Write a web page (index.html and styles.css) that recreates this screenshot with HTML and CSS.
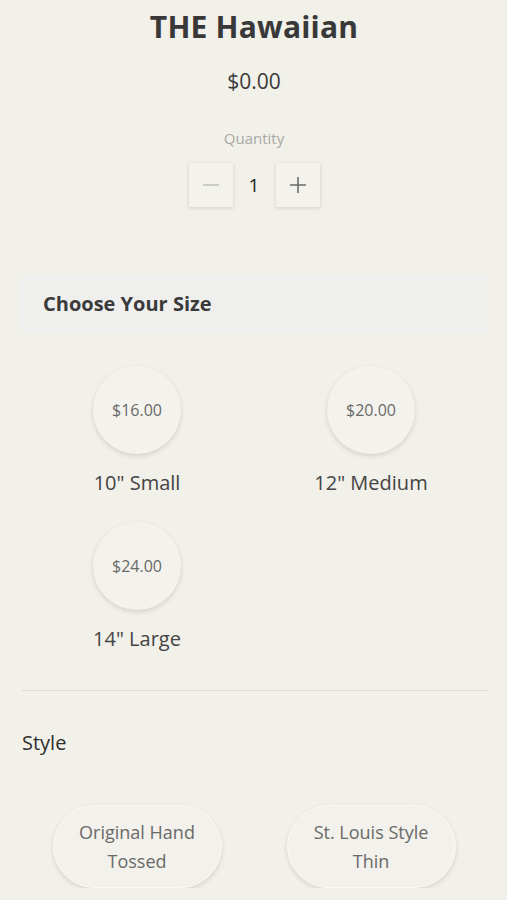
FILE: index.html
```html
<!DOCTYPE html>
<html>
<head>
<meta charset="utf-8">
<link rel="stylesheet" href="styles.css">
</head>
<body>
<div class="page">
  <h1 class="title">THE Hawaiian</h1>
  <div class="price">$0.00</div>
  <div class="qty-label">Quantity</div>
  <div class="qty">
    <button class="qbtn minus"><svg width="18" height="18" viewBox="0 0 18 18"><path d="M1 9h16" stroke="#c4c3bf" stroke-width="1.6"/></svg></button>
    <span class="qnum">1</span>
    <button class="qbtn plus"><svg width="18" height="18" viewBox="0 0 18 18"><path d="M1 9h16M9 1v16" stroke="#6a6a68" stroke-width="1.6"/></svg></button>
  </div>

  <div class="section-head">Choose Your Size</div>

  <div class="sizes">
    <div class="size">
      <div class="circle">$16.00</div>
      <div class="size-name">10" Small</div>
    </div>
    <div class="size">
      <div class="circle">$20.00</div>
      <div class="size-name">12" Medium</div>
    </div>
    <div class="size">
      <div class="circle">$24.00</div>
      <div class="size-name">14" Large</div>
    </div>
  </div>

  <hr class="divider">

  <div class="style-title">Style</div>

  <div class="styles">
    <div class="pill-cell"><div class="pill">Original Hand<br>Tossed</div></div>
    <div class="pill-cell"><div class="pill">St. Louis Style<br>Thin</div></div>
  </div>
</div>
</body>
</html>
```

FILE: styles.css
```css
html, body {
  margin: 0;
  padding: 0;
  background: #f1f0e9;
}
body {
  font-family: "Open Sans", "Liberation Sans", sans-serif;
  color: #333;
}
.page {
  padding: 0 19px 0 20px;
}
.title {
  margin: 0;
  padding-top: 8px;
  text-align: center;
  font-size: 30px;
  line-height: 38px;
  font-weight: 700;
  color: #383838;
  letter-spacing: 0.2px;
}
.price {
  margin-top: 22px;
  text-align: center;
  font-size: 21px;
  line-height: 26px;
  color: #3a3a3a;
}
.qty-label {
  margin-top: 35px;
  text-align: center;
  font-size: 15px;
  line-height: 18px;
  color: #a9a9a6;
}
.qty {
  margin-top: 16px;
  display: flex;
  justify-content: center;
  align-items: center;
  gap: 0;
}
.qbtn {
  width: 44px;
  height: 44px;
  border: none;
  padding: 0;
  background: #f3f2ed;
  box-shadow: 0 1px 4px rgba(0,0,0,0.14);
  display: flex;
  align-items: center;
  justify-content: center;
}
.qnum {
  width: 43px;
  text-align: center;
  font-size: 19px;
  color: #222;
}
.section-head {
  margin-top: 68px;
  height: 57px;
  background: #efefee;
  border-radius: 3px;
  padding-left: 23px;
  display: flex;
  align-items: center;
  font-size: 20px;
  font-weight: 700;
  color: #3a3a3a;
}
.sizes {
  margin-top: 34px;
  display: grid;
  grid-template-columns: 1fr 1fr;
  row-gap: 26px;
}
.size {
  display: flex;
  flex-direction: column;
  align-items: center;
}
.circle {
  width: 88px;
  height: 88px;
  border-radius: 50%;
  background: #f3f2ed;
  box-shadow: 0 2px 5px rgba(0,0,0,0.13);
  display: flex;
  align-items: center;
  justify-content: center;
  font-size: 16px;
  color: #6a6a68;
}
.size-name {
  margin-top: 16px;
  font-size: 20px;
  line-height: 26px;
  color: #444;
}
.divider {
  margin: 38px 0 0 2px;
  border: none;
  border-top: 1px solid #dcdbd5;
  height: 0;
}
.style-title {
  margin-top: 39px;
  margin-left: 2px;
  font-size: 20px;
  line-height: 26px;
  color: #2f2f2f;
}
.styles {
  margin-top: 49px;
  display: grid;
  grid-template-columns: 1fr 1fr;
}
.pill-cell {
  display: flex;
  justify-content: center;
}
.pill {
  width: 167px;
  height: 81px;
  border-radius: 42px;
  border: 1px solid #fbfaf6;
  background: #f2f1eb;
  box-shadow: 0 2px 5px rgba(0,0,0,0.12);
  display: flex;
  align-items: center;
  justify-content: center;
  text-align: center;
  font-size: 18px;
  line-height: 29px;
  color: #6a6a68;
}
```
